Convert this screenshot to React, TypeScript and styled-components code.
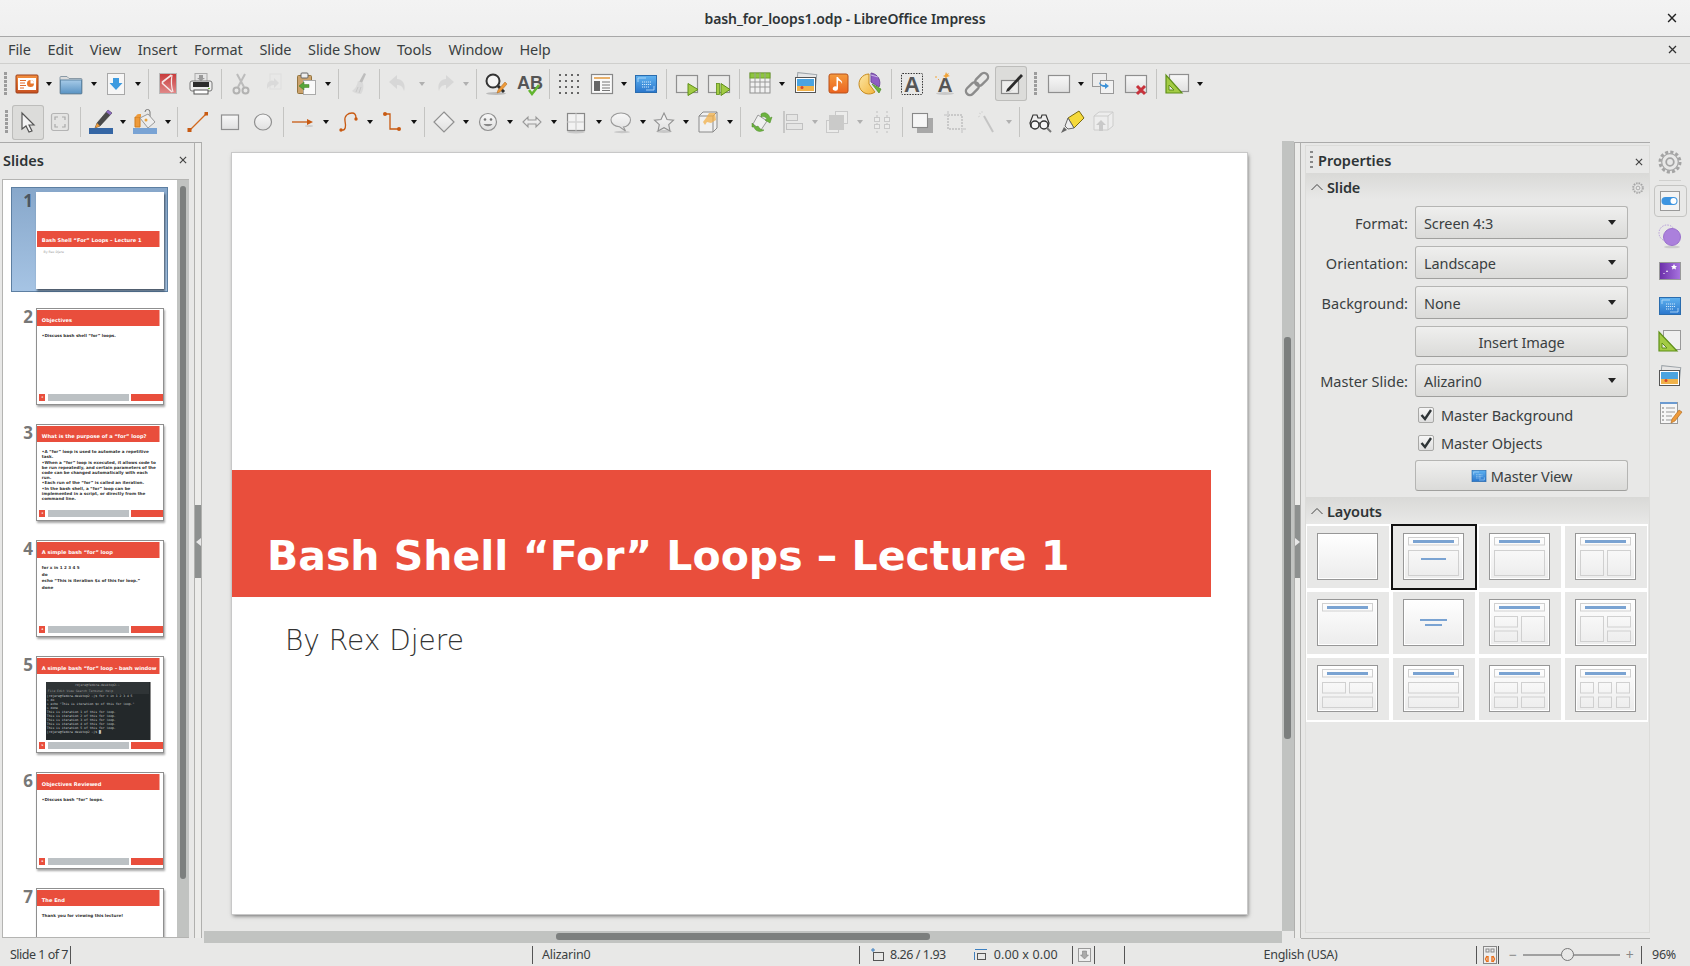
import React from 'react';
import styled, { createGlobalStyle } from 'styled-components';

const Global = createGlobalStyle`
  html, body { margin: 0; padding: 0; height: 966px; overflow: hidden; background: #e8e8e7; }
  * { box-sizing: border-box; }
  body { font-family: "Noto Sans", "Liberation Sans", sans-serif; color: #2e3436; }
`;

const Page = styled.div`
  width: 1690px; height: 966px; display: flex; flex-direction: column; background: #e8e8e7; overflow: hidden;
`;
const Defs = styled.svg`display: block; width: 0; height: 0;`;

const TitleBar = styled.header`
  height: 37px; flex: none; display: flex; align-items: center; justify-content: center; padding-left: 36px;
  background: linear-gradient(#f3f3f3, #efefef); border-bottom: 1px solid #a8a8a8; font-size: 14px; font-weight: 600; color: #2e3436;
  letter-spacing: -0.1px;
  & > span { flex: 1; text-align: center; }
`;
const CloseBox = styled.span`
  flex: none !important; width: 36px; display: flex; justify-content: center;
`;
const MenuBar = styled.nav`
  height: 27px; flex: none; display: flex; align-items: center; padding: 0 0 2px 8px; gap: 16.7px; font-size: 14.5px; color: #3a3f41;
  border-bottom: 1px solid #cfcfcd; letter-spacing: -0.1px;
`;
const MenuSpacer = styled.div`flex: 1;`;

const ToolRow = styled.div<{ $h: number }>`
  height: ${p => p.$h}px; flex: none; display: flex; align-items: center;
`;
const Grip = styled.i<{ $w: number }>`
  flex: none; width: ${p => p.$w}px; height: 24px; display: flex; justify-content: center;
  &::before { content: ""; width: 3px; height: 100%; background: repeating-linear-gradient(#9c9c9c 0 3px, transparent 3px 4px); }
`;
const Btn = styled.span<{ $active?: boolean; $faint?: boolean }>`
  flex: none; width: 32.25px; height: 35px; display: flex; align-items: center; justify-content: center;
  border-radius: 3px; opacity: ${p => (p.$faint ? 0.68 : 1)};
  ${p => p.$active ? 'background:#dcdcda; box-shadow: inset 0 0 0 1px #bdbdbb;' : ''}
`;
const Drop = styled.i<{ $faint?: boolean }>`
  flex: none; width: 12px; display: flex; justify-content: center;
  &::before { content: ""; border: 3.5px solid transparent; border-top: 4px solid ${p => (p.$faint ? '#b0b0b0' : '#111')}; border-bottom: 0; }
`;
const Sep = styled.i`
  flex: none; width: 8.5px; height: 30px; display: flex; justify-content: center;
  &::before { content: ""; width: 1px; height: 100%; background: #c4c4c2; }
`;
const Nudge = styled.i<{ $w: number }>`flex: none; margin-right: ${p => p.$w}px;`;
const Glyph = styled.svg`display: block; overflow: visible; flex: none;`;

const Main = styled.main`flex: 1; min-height: 0; display: flex;`;
const SlidesPane = styled.aside`
  width: 194px; flex: none; display: flex; flex-direction: column; border-top: 1px solid #aaa; margin-top: 1px;
`;
const SlidesHead = styled.div`
  height: 36px; flex: none; display: flex; align-items: center; justify-content: space-between; padding: 0 7px 2px 3px;
  font-size: 14.5px; font-weight: 600; color: #2e3436;
`;
const SlidesBody = styled.div`
  flex: 1; min-height: 0; margin: 0 0 5px 2px; border: 1px solid #b4b4b2; border-right: 0; display: flex; width: 187px;
  overflow: hidden;
`;
const SlideList = styled.div`
  flex: 1; background: #fff; padding: 7px 0 0 8px; overflow: hidden; min-width: 0;
`;
const SlideItem = styled.div<{ $sel?: boolean }>`
  width: 157px; height: 105px; margin-bottom: 11px; display: flex; padding: 4.5px 0 0 0; position: relative;
  ${p => p.$sel ? 'background: linear-gradient(#87a7ca, #a6c4e4); box-shadow: inset 0 0 0 1px #5d7fa2;' : ''}
`;
const SlideNo = styled.div<{ $sel?: boolean }>`
  width: 25px; flex: none; text-align: right; padding-right: 3px; font-size: 17px; line-height: 18px; font-weight: 700;
  color: ${p => (p.$sel ? '#4b5661' : '#777')}; font-family: "Noto Sans", sans-serif;
`;
const Thumb = styled.div<{ $sel?: boolean }>`
  width: 128px; height: 97px; flex: none; background: #fff; display: flex; flex-direction: column; overflow: hidden;
  border: 1px solid ${p => (p.$sel ? '#fff' : '#8f8f8f')};
  box-shadow: 1px 2px 2px rgba(0,0,0,${p => (p.$sel ? '.55' : '.35')});
  font-family: "DejaVu Sans", sans-serif; font-weight: 700;
`;
const ThumbHead = styled.div`
  flex: none; height: 16px; margin: 1.5px 4.5px 0 0; background: #e94e3c; color: #fff; font-size: 5.1px; white-space: nowrap;
  display: flex; align-items: flex-end; padding: 0 0 3px 4.8px; line-height: 6px; box-shadow: 1px 0 0 #f2a79e;
`;
const ThumbCover = styled(ThumbHead)`margin: 38.3px 4.5px 0 0; padding-bottom: 4px;`;
const ThumbBy = styled.div`padding: 3px 0 0 6.5px; font-size: 3.2px; font-weight: 400; color: #999;`;
const ThumbBody = styled.div<{ $gap?: number }>`
  flex: 1; min-height: 0; padding: 7px 5.2px 0 4.8px; font-size: 4.12px; line-height: 5px; color: #333;
  & > p { margin: 0 0 ${p => p.$gap ?? 0.7}px; }
`;
const ThumbFoot = styled.div`flex: none; height: 6.7px; margin: 0 0.5px 2.6px 2.1px; display: flex; gap: 2.5px;`;
const FootNo = styled.div`width: 6.4px; background: #e94e3c; color: #fff; font-size: 2.4px; text-align: center; line-height: 7px;`;
const FootMid = styled.div`width: 80.7px; background: #bcc1c4;`;
const FootEnd = styled.div`flex: 1; background: #e94e3c;`;
const Term = styled.div`
  flex: 1; min-height: 0; margin: 7.7px 12.3px 2px 8.8px; background: #23282a; color: #c8cccc; font-size: 3.1px; line-height: 4px; font-weight: 400;
  font-family: "DejaVu Sans Mono", monospace; white-space: nowrap; overflow: hidden; padding-right: 1px; border-right: 1px solid #8a8a8a;
`;
const TermTitle = styled.div`background: #2f3436; text-align: center; height: 7px; line-height: 7px; color: #aaa;`;
const TermMenu = styled.div`background: #2f3436; height: 5px; line-height: 5px; padding-left: 2px; color: #999;`;
const TermLine = styled.div`padding-left: 1px;`;
const VTrack = styled.div<{ $w: number; $pl: number; $pt: number; $pb: number }>`
  flex: none; width: ${p => p.$w}px; background: #c1c3c1; padding: ${p => `${p.$pt}px 0 ${p.$pb}px ${p.$pl}px`}; display: flex;
`;
const VThumb = styled.div<{ $w: number }>`width: ${p => p.$w}px; background: #7c7f7e; border-radius: 3px;`;

const Splitter = styled.div<{ $w: number }>`
  width: ${p => p.$w}px; flex: none; border-left: 1px solid #b0b0ae; border-right: 1px solid #b0b0ae; border-top: 1px solid #aaa;
  margin-top: 1px; margin-bottom: 5px; background: #ececea; display: flex; align-items: center; position: relative;
`;
const SplitGrip = styled.div<{ $dir: 'l' | 'r' }>`
  width: 100%; height: 73px; margin-top: 2px; background: #8d908f; display: flex; align-items: center; justify-content: center;
  &::before { content: ""; border: 4px solid transparent; border-${p => (p.$dir === 'l' ? 'left' : 'right')}: 0;
    border-${p => (p.$dir === 'l' ? 'right' : 'left')}: 5px solid #e8e8e8; }
`;

const Work = styled.section`
  flex: none; width: 1092px; display: grid; grid-template-columns: 1fr 12px; grid-template-rows: 1fr 12px;
`;
const Canvas = styled.div`
  overflow: hidden; padding: 12px 0 0 30px; min-height: 0;
`;
const Slide = styled.div`
  width: 1015px; height: 761px; background: #fff; box-shadow: 0 0 0 1px #c8c8c8, 1px 2px 4px rgba(0,0,0,.55); padding-top: 317px;
  font-family: "DejaVu Sans", sans-serif;
`;
const Band = styled.div`
  height: 127px; width: 979px; background: #e94e3c; color: #fff; font-weight: 700; font-size: 41px; padding: 60px 0 0 35px; line-height: 52px; white-space: nowrap;
`;
const Subtitle = styled.div`
  padding: 26px 0 0 53px; font-size: 28px; font-weight: 200; line-height: 36px; color: #333; 
`;
const HTrack = styled.div`background: #c1c3c1; margin-left: 2px; padding: 2px 0 3px 352px; display: flex;`;
const HThumb = styled.div`width: 374px; background: #7c7f7e; border-radius: 3px;`;
const Corner = styled.div`background: #e8e8e7;`;

const Deck = styled.aside`
  flex: none; width: 349px; padding: 2px 0 5px 4px; margin-top: 1px; border-top: 1px solid #aaa; border-bottom: 1px solid #b0b0ae; margin-bottom: 4px; display: flex;
`;
const DeckInner = styled.div`
  flex: 1; display: flex; flex-direction: column; border: 1px solid #dcdcda; min-width: 0;
`;
const DeckHead = styled.div`
  height: 27px; flex: none; display: flex; align-items: center; padding: 0 0 0 3px; font-size: 14.5px; font-weight: 600; gap: 5px; 
`;
const DeckGrip = styled.i`
  width: 3px; height: 17px; background: repeating-linear-gradient(#888 0 2px, transparent 2px 5px); margin-left: 1px;
`;
const DeckClose = styled.span`margin-left: auto; padding: 5px 6px 0 0; display: flex;`;
const SectionHead = styled.div<{ $h: number }>`
  height: ${p => p.$h}px; flex: none; display: flex; align-items: center; gap: 4px; padding: 1px 5px 0 5px; font-size: 14.5px; font-weight: 600; letter-spacing: -0.1px;
  background: linear-gradient(#d9d9d7, #e8e8e7);
`;
const SectionGear = styled.span`margin-left: auto; padding-top: 3px; display: flex;`;
const Form = styled.div`
  padding: 7px 21px 6px 0; display: flex; flex-direction: column; gap: 7px;
`;
const FormRow = styled.div`
  display: grid; grid-template-columns: 102px 213px; column-gap: 7px; align-items: center;
  font-size: 14.5px; color: #3a3f41;
`;
const FieldLabel = styled.div`text-align: right; white-space: nowrap;`;
const Field = styled.div`
  grid-column: 2; height: 33px; border: 1px solid #b5b5b3; border-bottom-color: #a0a09e; border-radius: 3px; background: linear-gradient(#efefee, #dbdbd9);
  display: flex; align-items: center; padding: 0 11px 0 8px; justify-content: space-between; letter-spacing: -0.1px;
  &::after { content: ""; border: 4.5px solid transparent; border-top: 5px solid #222; border-bottom: 0; }
`;
const PlainBtn = styled.div`
  grid-column: 2; height: 31px; border: 1px solid #b5b5b3; border-bottom-color: #a0a09e; border-radius: 3px; background: linear-gradient(#efefee, #dbdbd9);
  display: flex; align-items: center; justify-content: center; gap: 4px; letter-spacing: -0.15px;
`;
const CheckRow = styled.div`
  grid-column: 2; height: 21px; display: flex; align-items: center; gap: 7px; padding-left: 3px; margin: 0; letter-spacing: -0.1px;
`;
const CheckBox = styled.span`
  width: 16px; height: 16px; border: 1px solid #a8a8a6; border-radius: 2px; background: linear-gradient(#f6f6f6, #dedede); display: flex; flex: none;
`;
const LayoutGrid = styled.div`
  padding: 2px 1px; background: #fff; display: grid; grid-template-columns: repeat(4, 82px); gap: 4px; width: 342px;
`;
const LayoutCell = styled.div<{ $sel?: boolean }>`
  height: 62px; background: #e8e8e7; display: flex; align-items: flex-start; padding: 7px 0 0 10px; position: relative;
  ${p => p.$sel ? 'outline: 2px solid #111; outline-offset: 0;' : ''}
`;

const TabBar = styled.div`
  flex: 1; display: flex; flex-direction: column; align-items: center; padding-top: 8px;
`;
const TabItem = styled.div<{ $h: number; $active?: boolean }>`
  width: 33px; height: ${p => p.$h}px; display: flex; align-items: center; justify-content: center; flex: none;
  ${p => p.$active ? 'border: 1px solid #c4c4c2; border-radius: 4px;' : ''}
`;
const TabDivider = styled.div`width: 22px; height: 1px; background: #d0d0ce; margin: 5px 0 4px;`;

const Status = styled.footer`
  height: 23px; flex: none; display: flex; align-items: center; font-size: 12.5px; color: #3a3f41; letter-spacing: -0.25px;
`;
const Cell = styled.div<{ $w: number; $center?: boolean; $open?: boolean }>`
  width: ${p => p.$w}px; flex: none; height: 18px; display: flex; align-items: center; gap: 6px; white-space: nowrap;
  justify-content: ${p => (p.$center ? 'center' : 'flex-start')};
  border-right: ${p => (p.$open ? '0' : '1px solid #555')};
`;
const CellPad = styled.span<{ $l: number; $ls?: number }>`
  padding-left: ${p => p.$l}px; display: flex; align-items: center; gap: 6px;
  ${p => (p.$ls !== undefined ? `letter-spacing: ${p.$ls}px;` : '')}
`;
const ZoomTrack = styled.div`
  width: 97px; height: 2px; background: #a0a0a0; display: flex; justify-content: center; align-items: center;
  &::after { content: ""; width: 11px; height: 11px; border-radius: 50%; background: #e8e8e7; border: 1px solid #777; margin-left: -8px; flex: none; }
`;
const ZoomSign = styled.span`font-size: 14px; color: #888;`;

const st = (c: string, w = 1) => ({ stroke: c, strokeWidth: w, fill: 'none' });

const ICONS: Record<string, React.ReactNode> = {
  impress: <><rect x="1" y="3" width="22" height="18" rx="1" fill="url(#gOrange)" stroke="#9c3f18" /><rect x="3" y="6" width="18" height="12" fill="#fff" /><path d="M5 8.5h6M5 11h5M5 13.5h6M5 16h4" {...st('#e06a2c')} /><circle cx="15.5" cy="11.5" r="3.5" fill="#e8762c" /><path d="M15.5 11.5V8a3.5 3.5 0 0 1 3.5 3.5z" fill="#fff" /></>,
  folder: <><path d="M1 5.5a1 1 0 0 1 1-1h6l2 2h12a1 1 0 0 1 1 1V21a1 1 0 0 1-1 1H2a1 1 0 0 1-1-1z" fill="#dcdcdc" stroke="#8a9aa6" /><rect x="1.5" y="8" width="21" height="13.5" fill="url(#gFolder)" stroke="#5d86a6" /></>,
  save: <><rect x="3.5" y="1.5" width="17" height="21" fill="#f6f6f6" stroke="#a8a8a8" /><path d="M9 6h6v5h3.5L12 18l-6.5-7H9z" fill="#3d9be0" /></>,
  pdf: <><rect x="3.5" y="1.5" width="17" height="20" fill="url(#gPdf)" stroke="#b8b8b8" /><path d="M15.5 3L6.500 10v1.500l9.500 8.500" {...st('#f6e8e8', 1.6)} /><path d="M16 3c-1 6-1 11 1 17" {...st('#f6e8e8', 1.2)} /></>,
  print: <><rect x="6" y="1.5" width="12" height="8" fill="#e4e4e4" stroke="#aaa" /><path d="M10 3h4v3h2l-4 3-4-3h2z" fill="#999" /><rect x="1" y="9" width="22" height="10" rx="2" fill="#eee" stroke="#777" /><rect x="4" y="10" width="16" height="5" fill="#2c2c2c" /><rect x="5" y="18" width="14" height="4" fill="#fff" stroke="#555" /><rect x="19" y="16" width="2" height="1" fill="#7ac142" /></>,
  cut: <><path d="M8 2l7 13M16 2L9 15" {...st('#a8a8a8', 2)} /><circle cx="7.5" cy="18.5" r="3" {...st('#999', 2)} /><circle cx="16.5" cy="18.5" r="3" {...st('#999', 2)} /></>,
  copy: <><rect x="8" y="2" width="11" height="15" fill="#e8e8e7" stroke="#dcdcdc" /><path d="M5 13a5 5 0 0 1 7-4V6l5 5-5 5v-3c-3 0-5 1-7 4z" fill="#d4d4d4" /></>,
  paste: <><rect x="3.5" y="3.5" width="14" height="18" rx="1" fill="#cba26c" stroke="#93743f" /><rect x="7" y="1" width="7" height="5" rx="1" fill="#eee" stroke="#666" /><rect x="9.5" y="8.5" width="12" height="14" fill="#fafafa" stroke="#aaa" /><path d="M5 14l5-4v2.5h5v3h-5V18z" fill="#57a639" stroke="#3d7d26" strokeWidth=".5" /></>,
  brush: <><path d="M17 1l2 1-4 9-3-1z" fill="#aaa" /><path d="M11 9l5 2c1 4 0 8-2 11-3 0-7-1-9-3 3-2 5-5 6-10z" fill="#d4d4d4" /><path d="M9 20l2-5M12 21l2-6" {...st('#bbb')} /></>,
  undo: <path d="M10 3L2 10l8 7v-4c4 0 6 2 7 6 2-6-1-12-7-12z" fill="#d0d0d0" />,
  redo: <path d="M14 3l8 7-8 7v-4c-4 0-6 2-7 6-2-6 1-12 7-12z" fill="#d0d0d0" />,
  find: <><ellipse cx="12" cy="21.5" rx="10" ry="1.5" fill="#bbb" /><circle cx="9" cy="9" r="6.5" fill="#f4f4f4" stroke="#333" strokeWidth="2" /><path d="M14 14l6 6" {...st('#2c2c2c', 3)} /><path d="M21 10l2 2-7 8-3 1 1-3z" fill="#ee9a3a" stroke="#a9651a" strokeWidth=".5" /></>,
  spell: <><text x="0" y="17" fontFamily="Liberation Sans, sans-serif" fontWeight="700" fontSize="18" fill="#555">AB</text><path d="M12 18l3 4 7-9" {...st('#62b52f', 2.5)} /></>,
  grid: <>{[3, 9, 15, 21].map(y => [3, 9, 15, 21].map(x => <rect key={`${x}-${y}`} x={x - 1} y={y - 1} width="2" height="2" fill="#666" />))}</>,
  layout: <><rect x="1.5" y="2.5" width="21" height="19" fill="#fafafa" stroke="#888" strokeWidth="1.2" /><rect x="4" y="5" width="16" height="2" fill="#e8b06a" /><rect x="4" y="9" width="6" height="10" fill="#666" /><path d="M12 10h8M12 13h8M12 16h8M12 18.5h8" {...st('#777')} /></>,
  master: <><rect x="1.5" y="3.5" width="21" height="17" fill="url(#gBlue)" stroke="#2a6cae" /><path d="M4 10V6h8M20 14v4h-8" {...st('#bfe0fa', .8)} /><path d="M8 10h9M8 12.5h9M8 15h7" stroke="#cfe8fb" strokeDasharray="1.2 .8" fill="none" /></>,
  play: <><rect x="1.5" y="3.5" width="21" height="17" fill="#ebebea" stroke="#8f8f8f" strokeWidth="1.2" /><path d="M13 11.5v12L23 17.5z" fill="#a3cb44" stroke="#5e8f19" /></>,
  play2: <><rect x="1.5" y="3.5" width="21" height="17" fill="#ebebea" stroke="#8f8f8f" strokeWidth="1.2" /><rect x="9.5" y="11.5" width="3" height="11" fill="#a3cb44" stroke="#5e8f19" strokeWidth=".8" /><path d="M14 11.5v12L23 17.5z" fill="#a3cb44" stroke="#5e8f19" /></>,
  table: <><rect x="2" y="1" width="20" height="20" fill="#f2f2f2" stroke="#909090" /><rect x="2" y="1" width="20" height="5" fill="#8dc63f" stroke="#6fa428" /><path d="M7 1v20M12 1v20M17 1v20M2 10h20M2 15h20" {...st('#9a9a9a')} /></>,
  image: <><rect x="3" y="1.5" width="19" height="15" transform="rotate(6 12 9)" fill="#e6e6e6" stroke="#9ca3a8" /><rect x="1.5" y="5.5" width="20" height="15" fill="#fff" stroke="#555" /><rect x="3" y="7" width="17" height="7" fill="#4aa3df" /><rect x="3" y="14" width="17" height="5" fill="#f0b24a" /><circle cx="8" cy="15.5" r="1.5" fill="#d8442c" /></>,
  music: <><rect x="3" y="2" width="19" height="19" rx="2" fill="url(#gOrange2)" stroke="#b8501a" /><path d="M12 5v11.5a2.6 2.2 0 1 1-1.5-2V5zM12 5c1 3 5 3 4 7-.3-2-2-3-4-3.5z" fill="#fff" /></>,
  chart: <><path d="M11 12V2A10 10 0 1 0 17 20z" fill="url(#gYel)" stroke="#c68a1e" /><path d="M13 10V1a10 10 0 0 1 8 14z" fill="#8e5cc4" stroke="#6f4a9a" /><path d="M14 12l9 5-2 4z" fill="#6cb33f" stroke="#4a8a24" strokeWidth=".7" /><path d="M13 3l7 2" {...st('#c9b8e4')} /></>,
  textbox: <><rect x="1.5" y="1.5" width="21" height="21" rx="1" fill="none" stroke="#333" strokeDasharray="1.5 1.2" /><text x="12" y="19.5" textAnchor="middle" fontFamily="Liberation Sans, sans-serif" fontWeight="700" fontSize="22" fill="#555">A</text></>,
  fontwork: <><ellipse cx="13" cy="21.5" rx="9" ry="1.5" fill="#c8c8c8" /><text x="13" y="20" textAnchor="middle" fontFamily="Liberation Sans, sans-serif" fontWeight="700" fontSize="21" fill="#555">A</text><path d="M14 0l1 2 2-1-1 2 2 1-3 1-1 2-1-2-2-1 2-1zM4 4l1 1-1 1-1-1zM6 7h1v1H6z" fill="#f2a53a" /></>,
  link: <><g transform="rotate(-45 12 12)" {...st('#8c8c8c', 2.4)}><rect x="-2" y="8" width="15" height="8" rx="4" fill="#e8e8e7" /><rect x="11" y="8" width="15" height="8" rx="4" /></g></>,
  pencil: <><rect x="2.5" y="8.5" width="17" height="13" fill="#ededec" stroke="#888" strokeWidth="1.2" /><path d="M22 2l-14 15-1 3 3-1L24 4z" fill="#2c2c2c" /><path d="M7 20l8-2-5 2z" fill="#bbb" /></>,
  rect: <><rect x="1.5" y="3.5" width="21" height="17" fill="url(#gRect)" stroke="#8f8f8f" strokeWidth="1.2" /></>,
  dup: <><rect x="1.5" y="1.5" width="14" height="13" fill="#ececec" stroke="#999" /><rect x="9.5" y="8.5" width="13" height="13" fill="#f2f2f2" stroke="#999" /><path d="M8 10c2 3 4 3 6 3v-2l4 3-4 3v-2c-3 0-6-2-6-5z" fill="#3f93d8" /></>,
  del: <><rect x="1.5" y="3.5" width="21" height="17" fill="url(#gRect)" stroke="#8f8f8f" strokeWidth="1.2" /><path d="M13 14l8 8M21 14l-8 8" {...st('#c8323c', 3)} /></>,
  tri: <><rect x="4.5" y="2.5" width="19" height="17" fill="url(#gRect)" stroke="#8f8f8f" strokeWidth="1.2" /><path d="M1 3v18h16z" fill="#a3cb44" stroke="#5e8f19" strokeWidth="1.2" /><path d="M4 13v5h5z" fill="#e8e8e7" stroke="#5e8f19" /></>,

  select: <path d="M6 3v16l4-3 3 6 3-1-3-6h5z" fill="#f4f4f4" stroke="#555" strokeWidth="1.2" />,
  fit: <><rect x="3.5" y="3.5" width="17" height="17" rx="2" fill="#e4e4e3" stroke="#b4b4b4" strokeWidth="1.2" /><path d="M7 10V7h3M14 7h3v3M17 14v3h-3M10 17H7v-3" {...st('#aaa', 1.2)} /></>,
  linecolor: <><path d="M19 0l4 3-12 13-5 2 2-5z" fill="#4a4a4a" stroke="#2c2c2c" strokeWidth=".5" /><path d="M19 0l4 3-2 2-4-3z" fill="#8e6cc0" /><path d="M8 13l3 3-5 2z" fill="#ee9a3a" /><rect x="0" y="18" width="24" height="6" fill="#3566a4" /></>,
  fill: <><path d="M2 7h5v10H2z" fill="#ee9a3a" stroke="#d07c1c" /><path d="M3 7a3 3 0 0 1 3-3h2v3z" fill="#ee9a3a" /><path d="M12 2a2.5 2.5 0 0 1 5 0v5" {...st('#777')} /><path d="M7 8l8-4 7 8-7 6z" fill="#eee" stroke="#999" /><circle cx="13" cy="10" r="1.5" fill="#e8a23c" /><rect x="0" y="18" width="24" height="6" fill="#79a3d4" /></>,
  line: <><path d="M4 20L20 4" {...st('#d2691e', 1.3)} /><rect x="1.5" y="18" width="4" height="4" fill="#c85a12" /><rect x="18.5" y="2" width="3.5" height="3.5" fill="#c85a12" /></>,
  rectS: <rect x="3.5" y="5" width="17" height="14.5" fill="url(#gRect)" stroke="#8f8f8f" strokeWidth="1.2" />,
  ellipse: <ellipse cx="12" cy="12" rx="8.5" ry="8" fill="url(#gRect)" stroke="#8f8f8f" strokeWidth="1.2" />,
  arrowLine: <><path d="M1 12h17" {...st('#c85a12', 1.3)} /><path d="M16 9l6 3-6 3z" fill="#c85a12" /><ellipse cx="18" cy="16" rx="4" ry="1" fill="#ccc" /></>,
  curve: <><path d="M5 20c5 1 5-4 4-9S12 3 16 3s4 4 4 5" {...st('#c85a12', 1.3)} /><circle cx="5" cy="20" r="1.7" fill="#c85a12" /><circle cx="20" cy="9" r="1.7" fill="#c85a12" /></>,
  connector: <><path d="M5 4h5v15h9" {...st('#c85a12', 1.3)} /><circle cx="5" cy="4" r="2" fill="#c85a12" /><circle cx="19" cy="19" r="2" fill="#c85a12" /></>,
  diamond: <path d="M12 2l10 10-10 10L2 12z" fill="url(#gRect)" stroke="#909090" strokeWidth="1.2" />,
  smiley: <><circle cx="12" cy="12" r="8.5" fill="url(#gRect)" stroke="#909090" strokeWidth="1.2" /><circle cx="9" cy="9.5" r="1.3" fill="#777" /><circle cx="15" cy="9.5" r="1.3" fill="#777" /><path d="M7.5 14c2 3 7 3 9 0z" fill="#888" /></>,
  dbl: <path d="M3 12l5-5v3h8V7l5 5-5 5v-3H8v3z" fill="url(#gRect)" stroke="#999" strokeWidth="1.1" />,
  block: <><ellipse cx="12" cy="22" rx="9" ry="1.5" fill="#c8c8c8" /><rect x="3.5" y="3.5" width="17" height="17" fill="#f2f2f2" stroke="#888" strokeWidth="1.2" /><path d="M12 3.5v17M3.5 12H20" {...st('#d4d4d4', 1.5)} /></>,
  callout: <><ellipse cx="13" cy="22" rx="8" ry="1.2" fill="#c8c8c8" /><path d="M12 3c5.5 0 9.5 3 9.5 7s-4 7-7 7l2 4-6-4.2C6 16.500 2 14 2 10s4.500-7 10-7z" fill="url(#gRect)" stroke="#999" strokeWidth="1.1" /></>,
  star: <><ellipse cx="12" cy="21.500" rx="8" ry="1.5" fill="#c8c8c8" /><path d="M12 3l3 6.500 6.500.7-4.800 4.500L18 21l-6-3.300L6 21l1.300-6.300L2.500 10.200 9 9.500z" fill="url(#gRect)" stroke="#909090" strokeWidth="1.1" /></>,
  cube: <><path d="M3 6l4-4h14v16l-4 4H3z" fill="#f0f0f0" stroke="#8a8a8a" /><path d="M3 6h14v16M17 6l4-4" {...st('#8a8a8a')} /><path d="M13 3l6 0 1 7-5 3-4-1-2 3-2-3 3-4z" fill="#f2b04a" opacity=".75" /></>,
  rotate: <><path d="M8 6l9 6-6 9-8-6z" transform="translate(1 -1)" fill="#f0f0f0" stroke="#999" /><path d="M12 4c4-3 8 0 9 4l2-1-2 6-5-3 2-1c-1-2-3-3-6-2zM3 13l4 4 2-1c1 2 3 4 6 4-4 3-9 1-10-3l-2 0z" fill="#6cb33f" stroke="#4a8a24" strokeWidth=".5" /></>,
  align: <><path d="M3 1v22" {...st('#aaa', 1.5)} /><rect x="5.500" y="4.500" width="11" height="6" fill="#e4e4e4" stroke="#b0b0b0" /><rect x="5.500" y="13.500" width="16" height="6" fill="#e4e4e4" stroke="#b0b0b0" /></>,
  arrange: <><rect x="10.500" y="1.500" width="12" height="12" fill="#eee" stroke="#bbb" /><rect x="1.500" y="10.500" width="12" height="12" fill="#eee" stroke="#bbb" /><rect x="4" y="5" width="15" height="15" fill="#bcbcbc" /></>,
  dist: <><path d="M7 1v22M17 1v22" stroke="#b0b0b0" strokeDasharray="2 2" fill="none" /><rect x="4.500" y="7.500" width="5" height="4" fill="#eee" stroke="#bbb" /><rect x="14.500" y="7.500" width="5" height="4" fill="#eee" stroke="#bbb" /><rect x="4.500" y="14.500" width="5" height="4" fill="#eee" stroke="#bbb" /><rect x="14.500" y="14.500" width="5" height="4" fill="#eee" stroke="#bbb" /></>,
  shadow: <><rect x="7" y="8" width="16" height="15" fill="#a8a8a8" /><rect x="2.500" y="3.500" width="15" height="14" fill="#f6f6f6" stroke="#888" strokeWidth="1.1" /></>,
  crop: <><rect x="5" y="5" width="14" height="14" fill="none" stroke="#bbb" strokeDasharray="2 1" strokeWidth="2" /><path d="M1 5h4M19 19h4M5 1v4M19 19v4" {...st('#ccc', 2)} /></>,
  wand: <><path d="M9 6l9 16" {...st('#b4b4b4', 2)} /><path d="M4 3l2 1M7 1v2M3 7l2-1" {...st('#ccc')} /></>,
  findShape: <><path d="M2 13l3-8h4l1 3h3l1-3h4l3 8-1 4h-6l-1-4h-3l-1 4H3z" fill="#eee" stroke="#333" strokeWidth="1.2" /><circle cx="7" cy="15" r="4" fill="#f6f6f6" stroke="#333" strokeWidth="1.4" /><circle cx="16" cy="15" r="4" fill="#f6f6f6" stroke="#333" strokeWidth="1.4" /><path d="M19 18l4 4" {...st('#777', 2)} /></>,
  highlight: <><path d="M8 8L19 1l5 7-10 10z" fill="#f5d93a" stroke="#7a6a10" /><path d="M8 8l6 10-6 1-3-3z" fill="#eee" stroke="#666" /><path d="M4 17l3 3-6 3z" fill="#666" /></>,
  insert: <><path d="M2 6l5-4h14v14l-5 4H2z" fill="#f0f0f0" stroke="#c0c0c0" /><path d="M2 6h14v14M16 6l5-4" {...st('#c0c0c0')} /><path d="M9 10l5 5h-3v6H7v-6H4z" fill="#bbb" /></>,
};

const Ic = ({ n, s = 24 }: { n: string; s?: number }) => (
  <Glyph width={s} height={s} viewBox="0 0 24 24">{ICONS[n]}</Glyph>
);
const X = ({ s = 9, c = '#444' }: { s?: number; c?: string }) => (
  <Glyph width={s} height={s} viewBox="0 0 9 9"><path d="M1 1l7 7M8 1L1 8" stroke={c} strokeWidth="1.3" fill="none" /></Glyph>
);
const Chevron = () => (
  <Glyph width={12} height={8} viewBox="0 0 12 8"><path d="M.5 7L6 1.500 11.500 7" stroke="#444" fill="none" /></Glyph>
);
const Gear = ({ s, c = '#a4a4a4' }: { s: number; c?: string }) => (
  <Glyph width={s} height={s} viewBox="0 0 24 24">
    <circle cx="12" cy="12" r="10" fill="none" stroke={c} strokeWidth="3" strokeDasharray="3.100 2.136" />
    <circle cx="12" cy="12" r="8.300" fill="#e8e8e7" stroke={c} strokeWidth="1.200" />
    <circle cx="12" cy="12" r="3.800" fill="none" stroke={c} strokeWidth="1.800" />
  </Glyph>
);

const Tools = ({ spec }: { spec: string }) => (
  <>
    {spec.trim().split(/\s+/).map((t, i) => {
      if (t === '|') return <Sep key={i} />;
      if (t === 'v') return <Drop key={i} />;
      if (t === 'v-') return <Drop key={i} $faint />;
      if (t[0] === ':') return <Grip key={i} $w={+t.slice(1)} />;
      if (t[0] === '_') return <Nudge key={i} $w={+t.slice(1)} />;
      if (t[0] === '~') return <Btn key={i} $faint><Ic n={t.slice(1)} /></Btn>;
      if (t[0] === '!') return <Btn key={i} $active><Ic n={t.slice(1)} /></Btn>;
      return <Btn key={i}><Ic n={t} /></Btn>;
    })}
  </>
);

const ROW1 = ':10 _1 impress v folder v save v | pdf print | ~cut ~copy paste v | ~brush | ~undo v- ~redo v- | find spell | grid layout v master | play play2 | table v _2 image music chart _1 | textbox fontwork link _2 !pencil :16 rect v dup del | _1 tri v';
const ROW2 = ':12 !select fit | linecolor v fill v | line rectS ellipse | arrowLine v curve v connector v | _-1 diamond v smiley v dbl v block v callout v _-1 star v cube v | rotate ~align v- ~arrange v- ~dist | shadow ~crop ~wand v- | findShape highlight ~insert';

const SlideRow = ({ n, sel, children }: { n: number; sel?: boolean; children: React.ReactNode }) => (
  <SlideItem $sel={sel}>
    <SlideNo $sel={sel}>{n}</SlideNo>
    <Thumb $sel={sel}>{children}</Thumb>
  </SlideItem>
);
const Foot = ({ n }: { n: number }) => (
  <ThumbFoot><FootNo>{n}</FootNo><FootMid /><FootEnd /></ThumbFoot>
);
const TextThumb = ({ n, title, lines, gap, clipped }: { n: number; title: string; lines: string[]; gap?: number; clipped?: boolean }) => (
  <SlideRow n={n}>
    <ThumbHead>{title}</ThumbHead>
    <ThumbBody $gap={gap}>{lines.map((l, i) => <p key={i}>{l}</p>)}</ThumbBody>
    {!clipped && <Foot n={n} />}
  </SlideRow>
);

const TERM = [
  '[rdjere@fedora-desktop2 ~]$ for x in 1 2 3 4 5',
  '> do',
  '> echo "This is iteration $x of this for loop."',
  '> done',
  'This is iteration 1 of this for loop.',
  'This is iteration 2 of this for loop.',
  'This is iteration 3 of this for loop.',
  'This is iteration 4 of this for loop.',
  'This is iteration 5 of this for loop.',
  '[rdjere@fedora desktop2 ~]$ █',
];

type R = [number, number, number, number];
const T: R = [5, 4, 51, 8.5];
const TB: R = [10, 7, 41, 3];
const H = 11.5, Y1 = 17, Y2 = 31.5;
const LAYOUTS: { f: R[]; b: R[] }[] = [
  { f: [], b: [] },
  { f: [T, [5, 17, 51, 26]], b: [TB, [18, 25, 25, 2]] },
  { f: [T, [5, 17, 51, 26]], b: [TB] },
  { f: [T, [5, 17, 24, 26], [32, 17, 24, 26]], b: [TB] },
  { f: [T], b: [TB] },
  { f: [], b: [[17, 20, 27, 2], [22, 25, 17, 2]] },
  { f: [T, [5, Y1, 24, H], [5, Y2, 24, H], [32, 17, 24, 26]], b: [TB] },
  { f: [T, [5, 17, 24, 26], [32, Y1, 24, H], [32, Y2, 24, H]], b: [TB] },
  { f: [T, [5, Y1, 24, H], [32, Y1, 24, H], [5, Y2, 51, H]], b: [TB] },
  { f: [T, [5, Y1, 51, H], [5, Y2, 51, H]], b: [TB] },
  { f: [T, [5, Y1, 24, H], [32, Y1, 24, H], [5, Y2, 24, H], [32, Y2, 24, H]], b: [TB] },
  { f: [T, ...[5, 23, 41].flatMap(x => [[x, Y1, 14, H], [x, Y2, 14, H]] as R[])], b: [TB] },
];
const LayoutIcon = ({ f, b }: { f: R[]; b: R[] }) => (
  <Glyph width={61} height={47} viewBox="0 0 61 47">
    <rect x=".5" y=".5" width="60" height="46" fill="url(#gLayout)" stroke="#979797" />
    <rect x="1.500" y="1.500" width="58" height="44" fill="none" stroke="#fff" />
    {f.map((r, i) => <rect key={i} x={r[0] + .5} y={r[1] + .5} width={r[2] - 1} height={r[3] - 1} fill="none" stroke="#d0d0d0" />)}
    {b.map((r, i) => <rect key={i} x={r[0]} y={r[1]} width={r[2]} height={r[3]} fill="#7aa3d2" />)}
  </Glyph>
);

const TabIcons: Record<string, React.ReactNode> = {
  props: <><rect x="2.500" y="2.500" width="19" height="19" fill="#f4f4f4" stroke="#999" /><rect x="3.500" y="8" width="16" height="8" rx="4" fill="#3c94e0" /><circle cx="15.500" cy="12" r="3" fill="#fff" /></>,
  circle: <><circle cx="9" cy="9" r="8" fill="none" stroke="#b49ad8" strokeDasharray="1.5 1.2" /><ellipse cx="14" cy="23" rx="8" ry="1.3" fill="#ccc" /><circle cx="14" cy="13" r="8.500" fill="#ab80dc" stroke="#9a70cc" /></>,
  magic: <><rect x="1.500" y="3.500" width="21" height="17" fill="url(#gPurple)" stroke="#999" /><path d="M16 5l1 2 2 0-1.500 1.500.5 2-2-1-2 1 .5-2L13 7l2 0zM9 11l1 2-2 0zM6 14l1 1-2 0z" fill="#fff" /></>,
  blue: ICONS.master,
  tri: <><rect x="5.500" y="1.500" width="17" height="19" fill="#f0f0f0" stroke="#999" /><path d="M1 3v19h18z" fill="#a3cb44" stroke="#5e8f19" strokeWidth="1.2" /><path d="M4 14v5h5z" fill="#e8e8e7" stroke="#5e8f19" /></>,
  image: ICONS.image,
  list: <><rect x="2.500" y="1.500" width="17" height="21" fill="#f6f6f6" stroke="#9a9a9a" /><rect x="2" y="1" width="17" height="2" fill="#6b9ad0" /><path d="M8 7h9M8 11h9M8 15h6M8 19h6" {...st('#999')} /><path d="M4 7h2M4 11h2M4 15h2M4 19h2" {...st('#777')} /><path d="M21 9l3 2-7 9-4 2 1-4z" fill="#ee9a3a" stroke="#a9651a" strokeWidth=".6" /></>,
};
const TabGlyph = ({ n }: { n: string }) => <Glyph width={24} height={24} viewBox="0 0 24 24">{TabIcons[n]}</Glyph>;

export default function App() {
  return (
    <Page>
      <Global />
      <Defs aria-hidden="true">
        <defs>
          <linearGradient id="gOrange" x1="0" y1="0" x2="0" y2="1"><stop offset="0" stopColor="#f4913f" /><stop offset="1" stopColor="#c85020" /></linearGradient>
          <linearGradient id="gOrange2" x1="0" y1="0" x2="0" y2="1"><stop offset="0" stopColor="#f49a3c" /><stop offset="1" stopColor="#ec6420" /></linearGradient>
          <linearGradient id="gFolder" x1="0" y1="0" x2="0" y2="1"><stop offset="0" stopColor="#a7cbe8" /><stop offset="1" stopColor="#5b94c4" /></linearGradient>
          <linearGradient id="gPdf" x1="0" y1="0" x2="0" y2="1"><stop offset="0" stopColor="#c83a3a" /><stop offset="1" stopColor="#e08a8a" /></linearGradient>
          <linearGradient id="gBlue" x1="0" y1="0" x2="0" y2="1"><stop offset="0" stopColor="#5fb2f0" /><stop offset="1" stopColor="#2a76cc" /></linearGradient>
          <linearGradient id="gYel" x1="0" y1="0" x2="1" y2="1"><stop offset="0" stopColor="#fbe6a6" /><stop offset="1" stopColor="#f4b63c" /></linearGradient>
          <linearGradient id="gRect" x1="0" y1="0" x2="0" y2="1"><stop offset="0" stopColor="#f8f8f8" /><stop offset="1" stopColor="#e0e0e0" /></linearGradient>
          <linearGradient id="gLayout" x1="0" y1="0" x2="0" y2="1"><stop offset="0" stopColor="#ffffff" /><stop offset="1" stopColor="#ececec" /></linearGradient>
          <linearGradient id="gPurple" x1="0" y1="0" x2="1" y2="0"><stop offset="0" stopColor="#6a2ea8" /><stop offset="1" stopColor="#a874e0" /></linearGradient>
        </defs>
      </Defs>
      <TitleBar><span>bash_for_loops1.odp - LibreOffice Impress</span><CloseBox><X s={10} c="#222" /></CloseBox></TitleBar>
      <MenuBar>
        {['File', 'Edit', 'View', 'Insert', 'Format', 'Slide', 'Slide Show', 'Tools', 'Window', 'Help'].map(m => <span key={m}>{m}</span>)}
        <MenuSpacer />
        <CloseBox><X s={9} c="#333" /></CloseBox>
      </MenuBar>
      <ToolRow $h={39}><Tools spec={ROW1} /></ToolRow>
      <ToolRow $h={38}><Tools spec={ROW2} /></ToolRow>
      <Main>
        <SlidesPane>
          <SlidesHead>Slides<X s={8} /></SlidesHead>
          <SlidesBody>
            <SlideList>
              <SlideRow n={1} sel>
                <ThumbCover>Bash Shell “For” Loops – Lecture 1</ThumbCover>
                <ThumbBy>By Rex Djere</ThumbBy>
              </SlideRow>
              <TextThumb n={2} title="Objectives" lines={['•Discuss bash shell “for” loops.']} />
              <TextThumb n={3} title="What is the purpose of a “for” loop?" lines={[
                '•A “for” loop is used to automate a repetitive task.',
                '•When a “for” loop is executed, it allows code to be run repeatedly, and certain parameters of the code can be changed automatically with each run.',
                '•Each run of the “for” is called an iteration.',
                '•In the bash shell, a “for” loop can be implemented in a script, or directly from the command line.',
              ]} />
              <TextThumb n={4} gap={1.7} title="A simple bash “for” loop" lines={['for x in 1 2 3 4 5', 'do', 'echo “This is iteration $x of this for loop.”', 'done']} />
              <SlideRow n={5}>
                <ThumbHead>A simple bash “for” loop – bash window</ThumbHead>
                <Term>
                  <TermTitle>rdjere@fedora-desktop2:~</TermTitle>
                  <TermMenu>File Edit View Search Terminal Help</TermMenu>
                  {TERM.map((l, i) => <TermLine key={i}>{l}</TermLine>)}
                </Term>
                <Foot n={5} />
              </SlideRow>
              <TextThumb n={6} title="Objectives Reviewed" lines={['•Discuss bash “for” loops.']} />
              <TextThumb n={7} clipped title="The End" lines={['Thank you for viewing this lecture!']} />
            </SlideList>
            <VTrack $w={12} $pl={3} $pt={6} $pb={58}><VThumb $w={6} /></VTrack>
          </SlidesBody>
        </SlidesPane>
        <Splitter $w={8}><SplitGrip $dir="l" /></Splitter>
        <Work>
          <Canvas>
            <Slide>
              <Band>Bash Shell “For” Loops – Lecture 1</Band>
              <Subtitle>By Rex Djere</Subtitle>
            </Slide>
          </Canvas>
          <VTrack $w={12} $pl={2} $pt={196} $pb={192}><VThumb $w={7} /></VTrack>
          <HTrack><HThumb /></HTrack>
          <Corner />
        </Work>
        <Splitter $w={7}><SplitGrip $dir="r" /></Splitter>
        <Deck>
          <DeckInner>
            <DeckHead><DeckGrip />Properties<DeckClose><X s={8} /></DeckClose></DeckHead>
            <SectionHead $h={26}><Chevron />Slide<SectionGear><Gear s={12} /></SectionGear></SectionHead>
            <Form>
              <FormRow><FieldLabel>Format:</FieldLabel><Field>Screen 4:3</Field></FormRow>
              <FormRow><FieldLabel>Orientation:</FieldLabel><Field>Landscape</Field></FormRow>
              <FormRow><FieldLabel>Background:</FieldLabel><Field>None</Field></FormRow>
              <FormRow><PlainBtn>Insert Image</PlainBtn></FormRow>
              <FormRow><FieldLabel>Master Slide:</FieldLabel><Field>Alizarin0</Field></FormRow>
              <FormRow>
                <CheckRow><CheckBox><Glyph width={14} height={14} viewBox="0 0 14 14"><path d="M2.500 7l3.500 4 6-9" stroke="#2e3436" strokeWidth="2.400" fill="none" /></Glyph></CheckBox>Master Background</CheckRow>
              </FormRow>
              <FormRow>
                <CheckRow><CheckBox><Glyph width={14} height={14} viewBox="0 0 14 14"><path d="M2.500 7l3.500 4 6-9" stroke="#2e3436" strokeWidth="2.400" fill="none" /></Glyph></CheckBox>Master Objects</CheckRow>
              </FormRow>
              <FormRow><PlainBtn><Ic n="master" s={16} />Master View</PlainBtn></FormRow>
            </Form>
            <SectionHead $h={27}><Chevron />Layouts</SectionHead>
            <LayoutGrid>
              {LAYOUTS.map((l, i) => <LayoutCell key={i} $sel={i === 1}><LayoutIcon f={l.f} b={l.b} /></LayoutCell>)}
            </LayoutGrid>
          </DeckInner>
        </Deck>
        <TabBar>
          <TabItem $h={26}><Gear s={24} /></TabItem>
          <TabDivider />
          <TabItem $h={32} $active><TabGlyph n="props" /></TabItem>
          <TabItem $h={37}><TabGlyph n="circle" /></TabItem>
          <TabItem $h={34}><TabGlyph n="magic" /></TabItem>
          <TabItem $h={36}><TabGlyph n="blue" /></TabItem>
          <TabItem $h={34}><TabGlyph n="tri" /></TabItem>
          <TabItem $h={37}><TabGlyph n="image" /></TabItem>
          <TabItem $h={36}><TabGlyph n="list" /></TabItem>
        </TabBar>
      </Main>
      <Status>
        <Cell $w={71}><CellPad $l={10} $ls={-0.5}>Slide 1 of 7</CellPad></Cell>
        <Cell $w={462} />
        <Cell $w={327}><CellPad $l={9}>Alizarin0</CellPad></Cell>
        <Cell $w={213}>
          <CellPad $l={10} $ls={-0.45}>
            <Glyph width={14} height={14} viewBox="0 0 14 14"><rect x="3.500" y="4.500" width="10" height="8" fill="none" stroke="#555" /><path d="M3 0v4M1 2h4" stroke="#3c7fc0" /></Glyph>
            8.26 / 1.93
          </CellPad>
          <CellPad $l={22} $ls={0.1}>
            <Glyph width={14} height={14} viewBox="0 0 14 14"><rect x="3.500" y="5.500" width="8" height="6" fill="none" stroke="#555" /><path d="M1 1.500h12" stroke="#3c7fc0" /><path d="M.5 4v8" stroke="#3c7fc0" /></Glyph>
            0.00 x 0.00
          </CellPad>
        </Cell>
        <Cell $w={22}>
          <CellPad $l={5}>
            <Glyph width={13} height={14} viewBox="0 0 13 14"><rect x=".5" y=".5" width="12" height="13" fill="#eee" stroke="#999" /><path d="M4.500 3h4v4h2L6.500 11l-4-4h2z" fill="#aaa" stroke="#777" strokeWidth=".5" /></Glyph>
          </CellPad>
        </Cell>
        <Cell $w={30} />
        <Cell $w={352} $center>English (USA)</Cell>
        <Cell $w={22}>
          <CellPad $l={6}>
            <Glyph width={14} height={18} viewBox="0 0 14 18"><rect x=".5" y=".5" width="13" height="17" fill="#eee" stroke="#888" /><rect x="3" y="3" width="3" height="3" fill="none" stroke="#888" /><rect x="8" y="3" width="3" height="3" fill="none" stroke="#888" /><path d="M5 10v6M4 10l-1.500 3L4 16M9 10v6M10 10l1.500 3L10 16" stroke="#e8701c" strokeWidth="1.400" fill="none" /></Glyph>
          </CellPad>
        </Cell>
        <Cell $w={143}>
          <CellPad $l={10}><ZoomSign>−</ZoomSign><ZoomTrack /><ZoomSign>+</ZoomSign></CellPad>
        </Cell>
        <Cell $w={48} $open><CellPad $l={10}>96%</CellPad></Cell>
      </Status>
    </Page>
  );
}
